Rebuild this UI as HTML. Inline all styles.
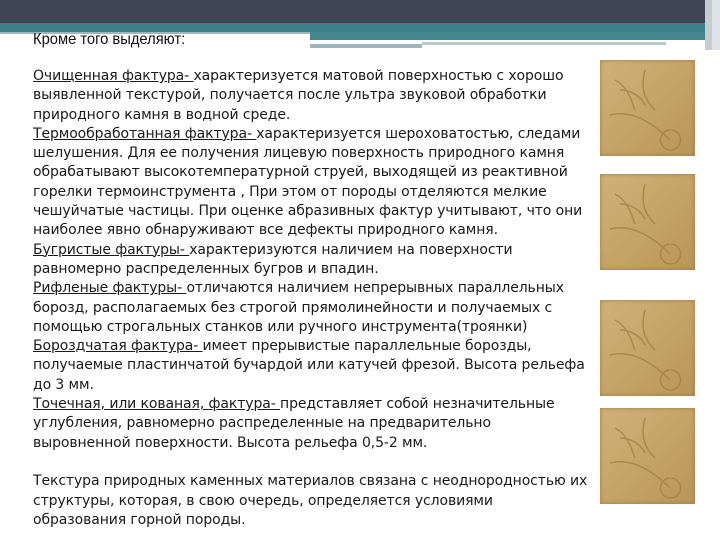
<!DOCTYPE html>
<html><head><meta charset="utf-8"><style>
body{margin:0;width:720px;height:540px;background:#fff;position:relative;overflow:hidden;font-family:"DejaVu Sans","Liberation Sans",sans-serif}
.dark{position:absolute;left:0;top:0;width:720px;height:23px;background:#3f4353}
.teal{position:absolute;left:0;top:23px;width:712px;height:9px;background:#3f7f88}
.lt{position:absolute;left:0;top:32px;width:310px;height:2px;background:#9fb6bc}
.tr{position:absolute;left:310px;top:32px;width:402px;height:8px;background:#46868e}
.wl{position:absolute;left:310px;top:40px;width:175px;height:4px;background:#fff}
.gb{position:absolute;left:310px;top:44px;width:112px;height:4px;background:#9eb5ba}
.gb2{position:absolute;left:422px;top:42px;width:244px;height:3px;background:#b8c8cc}
.vr{position:absolute;left:705px;top:0;width:7px;height:50px;background:#c6ccd2}
.vr2{position:absolute;left:712px;top:0;width:8px;height:50px;background:#dfe2e6}
.title{position:absolute;left:33px;top:31px;font-family:"Liberation Sans",sans-serif;font-size:16px;transform:scaleX(0.92);transform-origin:left;color:#111}
.txt{position:absolute;left:33px;top:67px;font-size:14px;line-height:19.3px;color:#1a1a1a;white-space:nowrap;letter-spacing:-0.1px}
u{text-decoration:underline}
.img{position:absolute;left:600px;width:95px;height:96px;background:linear-gradient(135deg,#cfb27a,#c5a468 50%,#b8955a);box-shadow:inset 0 0 4px #9a7a40}
.img svg{position:absolute;left:0;top:0}
</style></head><body>
<div class="dark"></div><div class="teal"></div><div class="lt"></div><div class="tr"></div><div class="wl"></div><div class="gb"></div><div class="gb2"></div><div class="vr"></div><div class="vr2"></div>
<div class="title">Кроме того выделяют:</div>
<div class="txt"><u>Очищенная фактура- </u>характеризуется матовой поверхностью  с хорошо<br>
выявленной текстурой, получается после ультра звуковой обработки<br>
природного камня в водной среде.<br>
<u>Термообработанная фактура- </u>характеризуется шероховатостью, следами<br>
шелушения. Для ее получения лицевую поверхность природного камня<br>
обрабатывают высокотемпературной струей, выходящей из реактивной<br>
горелки термоинструмента , При этом от породы отделяются мелкие<br>
чешуйчатые частицы. При оценке абразивных фактур учитывают, что они<br>
наиболее явно обнаруживают все дефекты природного камня.<br>
<u>Бугристые фактуры- </u>характеризуются наличием на поверхности<br>
равномерно распределенных бугров и впадин.<br>
<u>Рифленые фактуры- </u>отличаются наличием непрерывных параллельных<br>
борозд, располагаемых без строгой прямолинейности и получаемых с<br>
помощью строгальных станков или ручного инструмента(троянки)<br>
<u>Бороздчатая фактура- </u>имеет прерывистые параллельные борозды,<br>
получаемые пластинчатой бучардой или катучей фрезой. Высота рельефа<br>
до 3 мм.<br>
<u>Точечная, или кованая, фактура- </u>представляет собой незначительные<br>
углубления, равномерно распределенные на предварительно<br>
выровненной поверхности. Высота рельефа 0,5-2 мм.<br>
<br>
Текстура природных каменных материалов связана с неоднородностью их<br>
структуры, которая, в свою очередь, определяется условиями<br>
образования горной породы.</div>
<div class="img" style="top:60px"><svg width="95" height="96"><g fill="none" stroke="#9c7c45" stroke-width="1.5" opacity=".7"><path d="M15 20c10 5 15 15 20 30M45 10c-5 20 0 30 10 40M10 55c20-5 40 5 60 25M70 70a10 10 0 1 0 1 0M20 30c10 0 20 5 25 15"/></g></svg></div>
<div class="img" style="top:174px"><svg width="95" height="96"><g fill="none" stroke="#9c7c45" stroke-width="1.5" opacity=".7"><path d="M15 20c10 5 15 15 20 30M45 10c-5 20 0 30 10 40M10 55c20-5 40 5 60 25M70 70a10 10 0 1 0 1 0M20 30c10 0 20 5 25 15"/></g></svg></div>
<div class="img" style="top:300px"><svg width="95" height="96"><g fill="none" stroke="#9c7c45" stroke-width="1.5" opacity=".7"><path d="M15 20c10 5 15 15 20 30M45 10c-5 20 0 30 10 40M10 55c20-5 40 5 60 25M70 70a10 10 0 1 0 1 0M20 30c10 0 20 5 25 15"/></g></svg></div>
<div class="img" style="top:408px"><svg width="95" height="96"><g fill="none" stroke="#9c7c45" stroke-width="1.5" opacity=".7"><path d="M15 20c10 5 15 15 20 30M45 10c-5 20 0 30 10 40M10 55c20-5 40 5 60 25M70 70a10 10 0 1 0 1 0M20 30c10 0 20 5 25 15"/></g></svg></div>
</body></html>
